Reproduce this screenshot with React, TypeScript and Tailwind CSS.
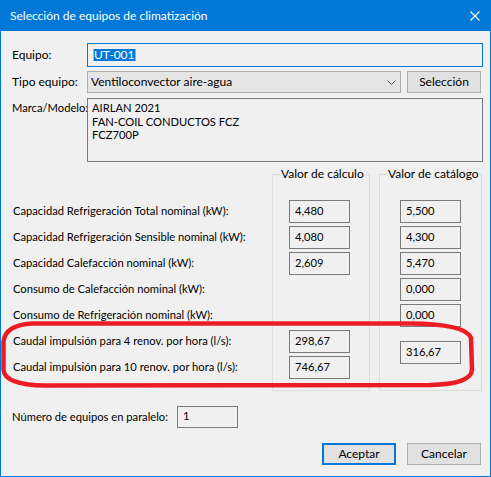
import React from "react";

function Box({ value, className = "" }: { value?: string; className?: string }) {
  return (
    <div
      className={`h-[23px] w-[61px] border border-[#7a7a7a] bg-[#f0f0f0] pl-[5px] pt-[2px] leading-[16px] ${className}`}
    >
      {value}
    </div>
  );
}

function Btn({ label, primary = false }: { label: string; primary?: boolean }) {
  return (
    <div
      className={`flex h-[22px] w-[74px] items-center justify-center whitespace-nowrap bg-[#e1e1e1] text-[12px] ${
        primary ? "border-2 border-[#0078d7]" : "border border-[#adadad]"
      }`}
    >
      {label}
    </div>
  );
}

function Group({ title, children, className = "" }: { title: string; children: React.ReactNode; className?: string }) {
  return (
    <div className={`relative h-[217px] shrink-0 border border-[#dcdcdc] ${className}`}>
      <span className="absolute left-[7px] top-[-10px] whitespace-nowrap bg-[#f0f0f0] px-[1px] text-[12px] leading-[18px]">
        {title}
      </span>
      {children}
    </div>
  );
}

const labels = [
  "Capacidad Refrigeración Total nominal (kW):",
  "Capacidad Refrigeración Sensible nominal (kW):",
  "Capacidad Calefacción nominal (kW):",
  "Consumo de Calefacción nominal (kW):",
  "Consumo de Refrigeración nominal (kW):",
  "Caudal impulsión para 4 renov. por hora (l/s):",
  "Caudal impulsión para 10 renov. por hora (l/s):",
];

export default function App() {
  return (
    <div className="relative flex h-[477px] w-[491px] flex-col whitespace-nowrap border-x border-b border-[#0078d7] bg-[#f0f0f0] font-['Lato',sans-serif] text-[11.2px] text-black">
      {/* Title bar */}
      <div className="flex h-[31px] shrink-0 items-center justify-between bg-[#0078d7] pl-[9px] pr-[10px] text-[12px] text-white">
        <span className="leading-[16px]">Selección de equipos de climatización</span>
        <svg width="10" height="10" viewBox="0 0 10 10" className="mt-[1px]">
          <path d="M0.5 0.5 L9.5 9.5 M9.5 0.5 L0.5 9.5" stroke="white" strokeWidth="1.1" />
        </svg>
      </div>

      {/* Equipo */}
      <div className="mt-[12px] flex items-center pl-[11px] pr-[7px]">
        <div className="w-[75px] shrink-0 text-[12px]">Equipo:</div>
        <div className="flex h-[24px] flex-1 items-center border border-[#0078d7] bg-[#f0f0f0] pl-[5px]">
          <span className="border-x border-[#f7a030] bg-[#0078d7] text-[12px] leading-[12px] text-white">UT-001</span>
        </div>
      </div>

      {/* Tipo equipo */}
      <div className="mt-[4px] flex items-center pl-[11px]">
        <div className="w-[75px] shrink-0 text-[12px]">Tipo equipo:</div>
        <div className="flex h-[22px] w-[314px] shrink-0 items-center justify-between border border-[#adadad] bg-[#e5e5e5] pl-[3px] pr-[4px] text-[12px]">
          <span>Ventiloconvector aire-agua</span>
          <svg width="9" height="5" viewBox="0 0 9 5">
            <path d="M0.5 0.5 L4.5 4.5 L8.5 0.5" stroke="#555" strokeWidth="1" fill="none" />
          </svg>
        </div>
        <div className="ml-[6px]">
          <Btn label="Selección" />
        </div>
      </div>

      {/* Marca/Modelo */}
      <div className="mt-[5px] flex items-start pl-[11px] pr-[7px]">
        <div className="w-[75px] shrink-0 pt-[2px]">Marca/Modelo:</div>
        <div className="h-[64px] flex-1 border border-[#7a7a7a] bg-[#f0f0f0] pl-[4px] pt-[2px] leading-[13.5px]">
          <div>AIRLAN 2021</div>
          <div>FAN-COIL CONDUCTOS FCZ</div>
          <div>FCZ700P</div>
        </div>
      </div>

      {/* Values */}
      <div className="mt-[12px] flex items-start pl-[11px]">
        <div className="flex w-[260px] shrink-0 flex-col gap-[3px] pl-[1px] pt-[26px]">
          {labels.map((l) => (
            <div key={l} className="flex h-[23px] items-center">
              {l}
            </div>
          ))}
        </div>
        <Group title="Valor de cálculo" className="w-[98px]">
          <div className="flex flex-col gap-[3px] pl-[16px] pt-[25px]">
            <Box value="4,480" />
            <Box value="4,080" />
            <Box value="2,609" />
            <div className="h-[23px]" />
            <div className="h-[23px]" />
            <Box value="298,67" />
            <Box value="746,67" />
          </div>
        </Group>
        <Group title="Valor de catálogo" className="ml-[9px] w-[103px]">
          <div className="flex flex-col gap-[3px] pl-[20px] pt-[25px]">
            <Box value="5,500" />
            <Box value="4,300" />
            <Box value="5,470" />
            <Box value="0,000" />
            <Box value="0,000" />
            <Box value="316,67" className="mt-[11px]" />
          </div>
        </Group>
      </div>

      {/* Número de equipos */}
      <div className="mt-[15px] flex items-center pl-[11px]">
        <div className="w-[165px] shrink-0">Número de equipos en paralelo:</div>
        <div className="h-[22px] w-[61px] border border-[#7a7a7a] bg-[#f0f0f0] pl-[5px] pt-[1px] leading-[16px]">1</div>
      </div>

      {/* Buttons */}
      <div className="mt-[15px] flex justify-end gap-[11px] pr-[9px]">
        <Btn label="Aceptar" primary />
        <Btn label="Cancelar" />
      </div>

      {/* Red annotation */}
      <svg
        className="pointer-events-none absolute left-[-1px] top-0"
        width="491"
        height="477"
        viewBox="0 0 491 477"
      >
        <path
          d="M32 323.5 L410 323.5 Q466 324 471 338 L472 370 Q471 384 430 385 L45 385.5 Q5 385 3.5 370 L3.5 342 Q5 325 32 323.5 Z"
          stroke="#ed1c24"
          strokeWidth="4.5"
          fill="none"
        />
      </svg>
    </div>
  );
}
